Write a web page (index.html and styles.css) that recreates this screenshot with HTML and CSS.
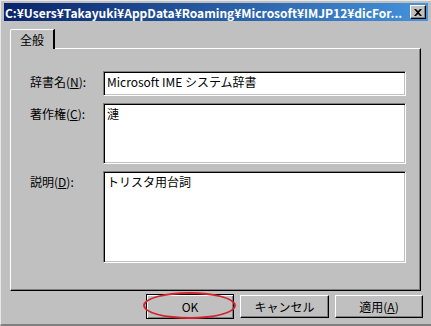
FILE: index.html
```html
<!DOCTYPE html>
<html lang="ja">
<head>
    <meta charset="UTF-8">
    <title>辞書のプロパティ</title>
    <link rel="stylesheet" href="styles.css">
</head>
<body>
    <div class="window">
        <div class="titlebar">
            <span class="title">C:¥Users¥Takayuki¥AppData¥Roaming¥Microsoft¥IMJP12¥dicFor...</span>
            <span class="close">
                <svg width="8" height="7" viewBox="0 0 8 7"><path d="M0 0h2l2 2 2-2h2L5 3.5 8 7H6L4 5 2 7H0l3-3.5z" fill="#000"/></svg>
            </span>
        </div>
        <div class="content">
            <div class="tabs">
                <div class="tab">全般</div>
            </div>
            <div class="panel">
                <div class="field">
                    <label class="label">辞書名(<u>N</u>):</label>
                    <div class="box box-name">Microsoft IME システム辞書</div>
                </div>
                <div class="field">
                    <label class="label">著作権(<u>C</u>):</label>
                    <div class="box box-copy">漣</div>
                </div>
                <div class="field">
                    <label class="label">説明(<u>D</u>):</label>
                    <div class="box box-desc">トリスタ用台詞</div>
                </div>
            </div>
            <div class="buttons">
                <div class="btn-wrap">
                    <button class="btn default">OK</button>
                    <span class="circle"></span>
                </div>
                <button class="btn wide">キャンセル</button>
                <button class="btn">適用(<u>A</u>)</button>
            </div>
        </div>
    </div>
</body>
</html>
```

FILE: styles.css
```css
body {
    margin: 0;
    background: #c0c0c0;
    font-family: "Noto Sans CJK JP", "Liberation Sans", sans-serif;
    font-size: 12px;
    color: #000;
}
.window {
    width: 431px;
    height: 326px;
    box-sizing: border-box;
    padding: 2px 3px 0;
    background: #c0c0c0;
    border-left: 1px solid #e8e8e8;
    border-top: 1px solid #e8e8e8;
    border-bottom: 2px solid #808080;
}
.titlebar {
    height: 18px;
    display: flex;
    align-items: center;
    justify-content: space-between;
    padding: 0 2px 0 1px;
    background: linear-gradient(to right, #0a246a, #4493dc);
}
.title {
    color: #fff;
    font-weight: bold;
    font-size: 12px;
    white-space: nowrap;
}
.close {
    width: 16px;
    height: 14px;
    box-sizing: border-box;
    display: flex;
    align-items: center;
    justify-content: center;
    background: #c0c0c0;
    border-top: 1px solid #fff;
    border-left: 1px solid #fff;
    border-right: 1px solid #000;
    border-bottom: 1px solid #000;
    box-shadow: inset -1px -1px 0 #808080;
}
.content {
    padding: 8px 0 0 6px;
}
.tabs {
    display: flex;
}
.tab {
    width: 45px;
    height: 20px;
    box-sizing: border-box;
    display: flex;
    align-items: center;
    justify-content: center;
    border-top: 1px solid #fff;
    border-left: 1px solid #fff;
    border-right: 2px solid #000;
    border-top-left-radius: 2px;
    margin-bottom: -1px;
    background: #c0c0c0;
    position: relative;
}
.panel {
    width: 411px;
    height: 243px;
    box-sizing: border-box;
    border-top: 1px solid #fff;
    border-left: 1px solid #fff;
    border-right: 1px solid #000;
    border-bottom: 1px solid #000;
    box-shadow: inset -1px -1px 0 #808080;
    padding: 22px 14px 0 19px;
    display: flex;
    flex-direction: column;
    gap: 7px;
}
.field {
    display: flex;
}
.label {
    width: 73px;
    padding-top: 4px;
    line-height: 14px;
}
.box {
    flex: 1;
    background: #fff;
    box-sizing: border-box;
    border-top: 1px solid #808080;
    border-left: 1px solid #808080;
    border-right: 1px solid #fff;
    border-bottom: 1px solid #fff;
    box-shadow: inset 1px 1px 0 #000, inset -1px -1px 0 #c0c0c0;
    padding: 2px 3px;
    line-height: 15px;
    white-space: nowrap;
}
.box-name { height: 25px; }
.box-copy { height: 61px; }
.box-desc { height: 92px; }
.buttons {
    display: flex;
    justify-content: flex-end;
    gap: 6px;
    padding: 3px 5px 0 0;
}
.btn-wrap {
    position: relative;
    display: flex;
}
.btn {
    width: 88px;
    height: 23px;
    box-sizing: border-box;
    margin: 0;
    padding: 0;
    font-family: "Noto Sans CJK JP", "Liberation Sans", sans-serif;
    font-size: 12px;
    color: #000;
    background: #c0c0c0;
    border-top: 1px solid #fff;
    border-left: 1px solid #fff;
    border-right: 1px solid #000;
    border-bottom: 1px solid #000;
    box-shadow: inset -1px -1px 0 #808080;
    margin-top: 1px;
}
.btn.wide { width: 89px; }
.btn.default {
    border: 1px solid #000;
    box-shadow: inset 1px 1px 0 #fff, inset -1px -1px 0 #808080;
    height: 25px;
    margin-top: 0;
}
.circle {
    position: absolute;
    left: -3px;
    top: -2px;
    width: 93px;
    height: 27px;
    box-sizing: border-box;
    border: 2px solid #d2232e;
    border-radius: 50%;
}
```
